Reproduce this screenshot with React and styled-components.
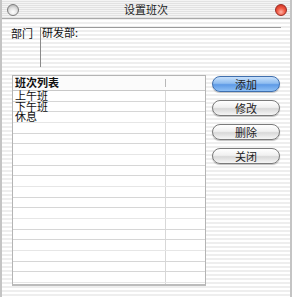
import React from 'react';
import styled, { createGlobalStyle } from 'styled-components';

const Global = createGlobalStyle`
  html, body {
    margin: 0;
    padding: 0;
    overflow: hidden;
    background: #ffffff;
  }
  * { box-sizing: border-box; }
`;

const FONT = `"Noto Sans CJK SC", "DejaVu Sans", sans-serif`;

const pinstripe = `repeating-linear-gradient(to bottom, #ffffff 0px, #ffffff 2px, #eeeeee 2px, #eeeeee 4px)`;

const Window = styled.div`
  width: 292px;
  height: 297px;
  display: flex;
  flex-direction: column;
  font-family: ${FONT};
  color: #111;
  border-left: 2px solid #c4c4c4;
  border-right: 2px solid #c4c4c4;
  background: ${pinstripe};
`;

const TitleBar = styled.div`
  height: 19px;
  flex: none;
  display: grid;
  grid-template-columns: 20px 1fr 20px;
  align-items: center;
  padding: 0 2px 0 2px;
  background: repeating-linear-gradient(to bottom, #f4f4f4 0px, #f4f4f4 1px, #e2e2e2 1px, #e2e2e2 2px);
  border-bottom: 1px solid #a8a8a8;
`;

const Title = styled.div`
  text-align: center;
  font-size: 11px;
  line-height: 18px;
  color: #222;
`;

const Light = styled.span`
  display: block;
  width: 12px;
  height: 12px;
  border-radius: 50%;
  justify-self: ${p => (p.$right ? 'end' : 'start')};
  margin: 2px ${p => (p.$right ? '1px' : '0')} 0 ${p => (p.$right ? '0' : '3px')};
  border: 1px solid ${p => (p.$red ? '#9a2a22' : '#7c7c7c')};
  background: ${p =>
    p.$red
      ? 'radial-gradient(circle at 50% 70%, #ffb3a6 0%, #f05a44 45%, #c8281a 100%)'
      : 'radial-gradient(circle at 50% 70%, #ffffff 0%, #e4e4e4 45%, #a6a6a6 100%)'};
`;

const Body = styled.div`
  flex: 1;
  display: flex;
  flex-direction: column;
  padding: 8px 9px 10px 8px;
  gap: 8px;
`;

const DeptRow = styled.div`
  display: flex;
  align-items: flex-start;
`;

const Label = styled.div`
  width: 30px;
  padding: 2px 0 0 1px;
  font-size: 11px;
  line-height: 9px;
`;

const Field = styled.div`
  flex: 1;
  height: 40px;
  border-top: 1px solid #9a9a9a;
  border-left: 1px solid #8a8a8a;
  padding: 0 0 0 1px;
  font-size: 11px;
  line-height: 9px;
`;

const Main = styled.div`
  display: flex;
  align-items: flex-start;
  gap: 6px;
`;

const Table = styled.div`
  width: 194px;
  height: 211px;
  margin-left: 2px;
  background: #ffffff;
  border: 1px solid #b4b4b4;
  border-bottom: 2px solid #bcbcbc;
  overflow: hidden;
`;

const HeaderRow = styled.div`
  display: grid;
  grid-template-columns: 153px 1fr;
  height: 15px;
  border-bottom: 1px solid #c8c8c8;
  background: #fbfbfb;
`;

const HeadCell = styled.div`
  font-size: 11px;
  font-weight: bold;
  line-height: 13px;
  padding-left: 2px;
  position: relative;
  &:after {
    content: '';
    display: ${p => (p.$last ? 'none' : 'block')};
    position: absolute;
    right: 0;
    top: 3px;
    bottom: 3px;
    width: 1px;
    background: #b8b8b8;
  }
`;

const Row = styled.div`
  display: grid;
  grid-template-columns: 153px 1fr;
  height: 10.67px;
  border-bottom: 1px solid ${p => (p.$light ? '#e6e6e6' : '#d6d6d6')};
`;

const Cell = styled.div`
  font-size: 11px;
  line-height: 9.67px;
  padding-left: 2px;
  white-space: nowrap;
  border-right: ${p => (p.$last ? 'none' : '1px solid #d8d8d8')};
`;

const Buttons = styled.div`
  display: flex;
  flex-direction: column;
  gap: 8px;
  padding-top: 1px;
`;

const AquaButton = styled.button`
  width: 68px;
  height: 16px;
  padding: 0;
  border-radius: 8px;
  font-family: ${FONT};
  font-size: 11px;
  line-height: 14px;
  color: #222;
  border: 1px solid ${p => (p.$primary ? '#3f6fae' : '#7a7a7a')};
  background: ${p =>
    p.$primary
      ? 'linear-gradient(to bottom, #c9e1fb 0%, #8fbdf0 45%, #5e9ae6 55%, #8ec0f6 100%)'
      : 'linear-gradient(to bottom, #ffffff 0%, #f0f0f0 45%, #d8d8d8 55%, #f6f6f6 100%)'};
  box-shadow: 0 1px 1px rgba(0, 0, 0, 0.25);
`;

const shifts = ['上午班', '下午班', '休息'];

const App = () => {
  const rows = Array.from({ length: 19 }, (_, i) => shifts[i] || '');
  return (
    <>
      <Global />
      <Window>
        <TitleBar>
          <Light />
          <Title>设置班次</Title>
          <Light $right $red />
        </TitleBar>
        <Body>
          <DeptRow>
            <Label>部门</Label>
            <Field>研发部:</Field>
          </DeptRow>
          <Main>
            <Table>
              <HeaderRow>
                <HeadCell>班次列表</HeadCell>
                <HeadCell $last />
              </HeaderRow>
              {rows.map((name, i) => (
                <Row key={i} $light={i % 3 === 2}>
                  <Cell>{name}</Cell>
                  <Cell $last />
                </Row>
              ))}
            </Table>
            <Buttons>
              <AquaButton $primary>添加</AquaButton>
              <AquaButton>修改</AquaButton>
              <AquaButton>删除</AquaButton>
              <AquaButton>关闭</AquaButton>
            </Buttons>
          </Main>
        </Body>
      </Window>
    </>
  );
};

export default App;
